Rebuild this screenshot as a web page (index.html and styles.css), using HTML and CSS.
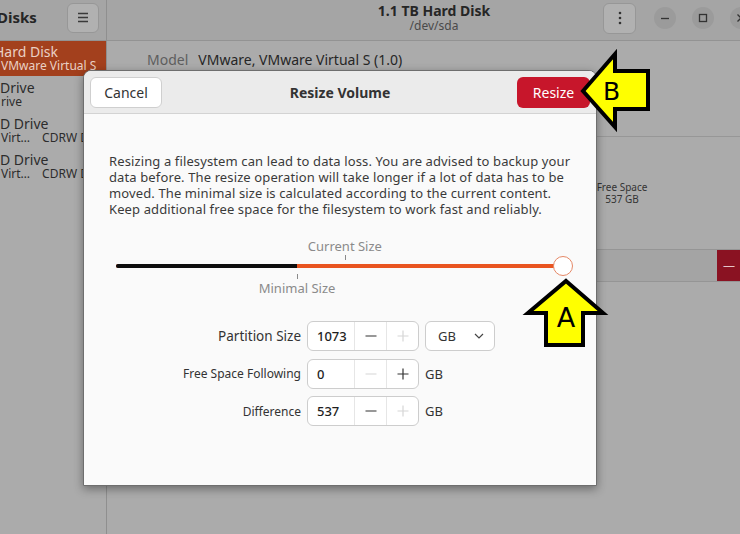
FILE: index.html
```html
<!DOCTYPE html>
<html lang="en">
<head>
<meta charset="utf-8">
<title>Disks – Resize Volume</title>
<link rel="stylesheet" href="styles.css">
</head>
<body>
<div class="app">
  <aside class="sidebar">
    <div class="side-head">
      <span class="app-title">Disks</span>
      <button class="menu-btn" aria-label="Menu">
        <svg width="12" height="11" viewBox="0 0 12 11"><path d="M1 1.5h10M1 5.5h10M1 9.5h10" stroke="#3a3a3a" stroke-width="1.3"/></svg>
      </button>
    </div>
    <ul class="disk-list">
      <li class="disk selected"><span class="d-name shift-h">Hard Disk</span><span class="d-sub">VMware Virtual S</span></li>
      <li class="disk"><span class="d-name">Drive</span><span class="d-sub">rive</span></li>
      <li class="disk"><span class="d-name">D Drive</span><span class="d-sub"><span>Virt…</span><span>CDRW Drive</span></span></li>
      <li class="disk"><span class="d-name">D Drive</span><span class="d-sub"><span>Virt…</span><span>CDRW Drive</span></span></li>
    </ul>
  </aside>
  <main class="main">
    <header class="main-head">
      <div class="title-box">
        <span class="win-title">1.1 TB Hard Disk</span>
        <span class="win-sub">/dev/sda</span>
      </div>
      <div class="head-actions">
        <button class="kebab" aria-label="More">
          <svg width="4" height="14" viewBox="0 0 4 14"><circle cx="2" cy="2" r="1.3" fill="#333"/><circle cx="2" cy="7" r="1.3" fill="#333"/><circle cx="2" cy="12" r="1.3" fill="#333"/></svg>
        </button>
        <span class="wbtn"><svg width="10" height="10" viewBox="0 0 10 10"><path d="M1 5.5h8" stroke="#333" stroke-width="1.3"/></svg></span>
        <span class="wbtn"><svg width="10" height="10" viewBox="0 0 10 10"><rect x="1.5" y="1.5" width="7" height="7" fill="none" stroke="#333" stroke-width="1.3"/></svg></span>
        <span class="wbtn"><svg width="10" height="10" viewBox="0 0 10 10"><path d="M1.5 1.5l7 7M8.5 1.5l-7 7" stroke="#333" stroke-width="1.3"/></svg></span>
      </div>
    </header>
    <section class="content">
      <div class="model-row"><span class="k">Model</span><span class="v">VMware, VMware Virtual S (1.0)</span></div>
      <div class="volumes">
        <div class="free"><span>Free Space</span><span>537 GB</span></div>
      </div>
      <div class="vol-toolbar">
        <span class="del-btn">—</span>
      </div>
    </section>
  </main>

  <div class="dialog" role="dialog" aria-label="Resize Volume">
    <div class="dlg-head">
      <button class="btn-cancel">Cancel</button>
      <span class="dlg-title">Resize Volume</span>
      <button class="btn-resize">Resize</button>
    </div>
    <div class="dlg-body">
      <p class="warn">Resizing a filesystem can lead to data loss. You are advised to backup your<br>data before. The resize operation will take longer if a lot of data has to be<br>moved. The minimal size is calculated according to the current content.<br>Keep additional free space for the filesystem to work fast and reliably.</p>

      <div class="slider">
        <span class="mark-label top" style="left:51.2%">Current Size</span>
        <span class="tick top" style="left:51.2%"></span>
        <div class="track"><div class="track-min" style="width:40.5%"></div></div>
        <span class="handle" style="left:100%"></span>
        <span class="tick bottom" style="left:40.5%"></span>
        <span class="mark-label bottom" style="left:40.5%">Minimal Size</span>
      </div>

      <div class="form">
        <label class="f-label big">Partition Size</label>
        <div class="spin">
          <span class="spin-val">1073</span>
          <span class="spin-btn"><svg width="12" height="12" viewBox="0 0 12 12"><path d="M0.5 6h11" stroke="#333" stroke-width="1.2"/></svg></span>
          <span class="spin-btn off"><svg width="12" height="12" viewBox="0 0 12 12"><path d="M0.5 6h11M6 0.5v11" stroke="#d6d6d6" stroke-width="1.2"/></svg></span>
        </div>
        <div class="dropdown"><span>GB</span><svg width="10" height="6" viewBox="0 0 10 6"><path d="M1 1l4 4 4-4" fill="none" stroke="#444" stroke-width="1.2"/></svg></div>

        <label class="f-label">Free Space Following</label>
        <div class="spin">
          <span class="spin-val">0</span>
          <span class="spin-btn off"><svg width="12" height="12" viewBox="0 0 12 12"><path d="M0.5 6h11" stroke="#d6d6d6" stroke-width="1.2"/></svg></span>
          <span class="spin-btn"><svg width="12" height="12" viewBox="0 0 12 12"><path d="M0.5 6h11M6 0.5v11" stroke="#333" stroke-width="1.2"/></svg></span>
        </div>
        <span class="unit">GB</span>

        <label class="f-label">Difference</label>
        <div class="spin">
          <span class="spin-val">537</span>
          <span class="spin-btn"><svg width="12" height="12" viewBox="0 0 12 12"><path d="M0.5 6h11" stroke="#333" stroke-width="1.2"/></svg></span>
          <span class="spin-btn off"><svg width="12" height="12" viewBox="0 0 12 12"><path d="M0.5 6h11M6 0.5v11" stroke="#d6d6d6" stroke-width="1.2"/></svg></span>
        </div>
        <span class="unit">GB</span>
      </div>
    </div>
  </div>

  <svg class="callout callout-b" width="80" height="82" viewBox="0 0 80 82">
    <polygon points="5,41 37,4 37,21 70,21 70,59 37,59 37,77" fill="#ffff00" stroke="#000" stroke-width="4" stroke-linejoin="miter"/>
    <text x="33.5" y="50" text-anchor="middle" class="callout-text">B</text>
  </svg>
  <svg class="callout callout-a" width="84" height="74" viewBox="0 0 84 74">
    <polygon points="42,4 79,36 59,36 59,68 22,68 22,36 4,36" fill="#ffff00" stroke="#000" stroke-width="4" stroke-linejoin="miter"/>
    <text x="42" y="50" text-anchor="middle" class="callout-text a">A</text>
  </svg>
</div>
</body>
</html>
```
FILE: styles.css
```css
* { box-sizing: border-box; }
html, body { margin: 0; padding: 0; }
body {
  font-family: "Noto Sans", "DejaVu Sans", sans-serif;
  color: #2c2c2c;
  background: #ababab;
}
button { font-family: inherit; }

.app {
  position: relative;
  width: 740px;
  height: 534px;
  overflow: hidden;
  display: flex;
  background: #ababab;
}

/* ---------- sidebar ---------- */
.sidebar {
  width: 107px;
  flex: none;
  border-right: 1px solid #8f8f8f;
  background: #ababab;
  display: flex;
  flex-direction: column;
}
.side-head {
  height: 41px;
  flex: none;
  display: flex;
  align-items: center;
  justify-content: space-between;
  padding: 0 7px 0 0;
  background: #a5a5a5;
  border-bottom: 1px solid #939393;
}
.app-title {
  font-weight: 700;
  font-size: 15px;
  line-height: 18px;
  margin-left: -3px;
  margin-top: -6px;
  color: #262626;
}
.menu-btn {
  width: 32px;
  height: 30px;
  border: 1px solid #979797;
  border-radius: 6px;
  background: #b1b1b1;
  display: flex;
  align-items: center;
  justify-content: center;
  padding: 0;
  margin-top: -5px;
}
.disk-list { list-style: none; margin: 0; padding: 0; }
.disk {
  height: 36px;
  display: flex;
  flex-direction: column;
  justify-content: center;
  overflow: hidden;
  white-space: nowrap;
}
.disk.selected { background: #a3401d; color: #ead0c4; height: 35px; }
.d-name { font-size: 14px; line-height: 15px; }
.d-name.shift-h { margin-left: -6px; }
.d-sub { font-size: 12px; line-height: 14px; display: flex; gap: 12px; padding-left: 1px; }

/* ---------- main ---------- */
.main {
  flex: 1;
  display: flex;
  flex-direction: column;
  min-width: 0;
}
.main-head {
  height: 41px;
  flex: none;
  display: flex;
  align-items: center;
  background: #a5a5a5;
  border-bottom: 1px solid #939393;
  margin-right: -12px;
}
.title-box {
  width: 200px;
  margin-left: 227px;
  display: flex;
  flex-direction: column;
  align-items: center;
  line-height: 15px;
  margin-top: -4px;
}
.win-title { font-weight: 700; font-size: 14px; color: #262626; }
.win-sub { font-size: 12px; color: #4a4a4a; }
.head-actions {
  margin-left: auto;
  display: flex;
  align-items: center;
  gap: 16px;
  margin-top: -4px;
}
.kebab {
  width: 33px;
  height: 31px;
  border: 1px solid #979797;
  border-radius: 6px;
  background: #b1b1b1;
  display: flex;
  align-items: center;
  justify-content: center;
  padding: 0;
  margin-right: 2px;
}
.wbtn {
  width: 22px;
  height: 22px;
  border-radius: 50%;
  background: #9b9b9b;
  display: flex;
  align-items: center;
  justify-content: center;
}

.content {
  flex: 1;
  display: flex;
  flex-direction: column;
  background: #ababab;
}
.model-row {
  height: 96px;
  padding: 9px 0 0 40px;
  font-size: 14px;
  line-height: 20px;
  border-bottom: 1px solid #979797;
  display: flex;
  gap: 10px;
  align-items: flex-start;
}
.model-row .k { color: #5e5e5e; }
.model-row .v { color: #262626; }
.volumes {
  height: 112px;
  display: flex;
  justify-content: flex-end;
  padding-top: 44px;
}
.free {
  width: 236px;
  display: flex;
  flex-direction: column;
  align-items: center;
  gap: 0;
  font-size: 10px;
  line-height: 12px;
  color: #333;
}
.vol-toolbar {
  height: 33px;
  background: #a4a4a4;
  border-top: 1px solid #959595;
  border-bottom: 1px solid #959595;
  display: flex;
  justify-content: flex-end;
}
.del-btn {
  width: 24px;
  background: #8a1222;
  color: #e5c4c8;
  font-size: 12px;
  display: flex;
  align-items: center;
  justify-content: center;
  margin-right: -1px;
}

/* ---------- dialog ---------- */
.dialog {
  position: absolute;
  left: 83px;
  top: 70px;
  width: 514px;
  height: 416px;
  background: #fafafa;
  border: 1px solid #6e6e6e;
  border-radius: 8px 8px 0 0;
  box-shadow: 0 3px 10px rgba(0,0,0,0.38);
  display: flex;
  flex-direction: column;
  overflow: hidden;
}
.dlg-head {
  height: 43px;
  flex: none;
  background: #ebebeb;
  border-bottom: 1px solid #d3d3d3;
  display: grid;
  grid-template-columns: 1fr auto 1fr;
  align-items: center;
  padding: 0 6px;
}
.btn-cancel {
  justify-self: start;
  width: 72px;
  height: 31px;
  border: 1px solid #cfcfcf;
  border-radius: 6px;
  background: #ffffff;
  font-size: 14px;
  color: #333;
  padding: 0;
}
.dlg-title { font-weight: 700; font-size: 14px; color: #333; }
.btn-resize {
  justify-self: end;
  width: 73px;
  height: 31px;
  border: none;
  border-radius: 6px;
  background: #c7162b;
  color: #fff;
  font-size: 14px;
  padding: 0;
}
.dlg-body {
  flex: 1;
  padding: 39px 25px 0 25px;
  display: flex;
  flex-direction: column;
}
.warn {
  margin: 0;
  font-size: 13px;
  line-height: 16px;
  letter-spacing: 0.12px;
  color: #3a3a3a;
  white-space: nowrap;
}

.slider {
  position: relative;
  margin: 21px 0 0 7px;
  width: 447px;
  height: 58px;
}
.mark-label {
  position: absolute;
  transform: translateX(-50%);
  font-size: 13px;
  line-height: 16px;
  color: #8a8a8a;
  white-space: nowrap;
}
.mark-label.top { top: 0; }
.mark-label.bottom { top: 42px; }
.tick {
  position: absolute;
  width: 1px;
  height: 5px;
  background: #8a8a8a;
}
.tick.top { top: 17px; }
.tick.bottom { top: 36px; }
.track {
  position: absolute;
  left: 0;
  right: 0;
  top: 26px;
  height: 4px;
  border-radius: 2px;
  background: #e95420;
}
.track-min {
  height: 100%;
  background: #0d0d0d;
  border-radius: 2px 0 0 2px;
}
.handle {
  position: absolute;
  top: 18px;
  width: 20px;
  height: 20px;
  margin-left: -10px;
  border-radius: 50%;
  background: #fff;
  border: 1.5px solid #e58866;
}

.form {
  margin-top: 25px;
  display: grid;
  grid-template-columns: 193px 112px auto;
  grid-auto-rows: 30px;
  column-gap: 6px;
  row-gap: 7.5px;
  align-items: center;
  margin-left: -1px;
}
.f-label {
  justify-self: end;
  font-size: 12px;
  color: #333;
}
.f-label.big { font-size: 13.5px; }
.spin {
  height: 30px;
  display: flex;
  border: 1px solid #cdcdcd;
  border-radius: 6px;
  background: #fff;
  overflow: hidden;
}
.spin-val {
  width: 46px;
  padding-left: 9px;
  display: flex;
  align-items: center;
  font-size: 13px;
  font-weight: 500;
  color: #1e1e1e;
}
.spin-btn {
  flex: 1;
  display: flex;
  align-items: center;
  justify-content: center;
  border-left: 1px solid #e6e6e6;
}
.dropdown {
  justify-self: start;
  width: 70px;
  height: 30px;
  border: 1px solid #cdcdcd;
  border-radius: 6px;
  background: #fff;
  display: flex;
  align-items: center;
  justify-content: space-between;
  padding: 0 10px 0 12px;
  font-size: 13px;
  color: #333;
}
.unit { font-size: 13px; color: #333; }

/* ---------- callouts ---------- */
.callout { position: absolute; overflow: visible; }
.callout-b { left: 578px; top: 50px; }
.callout-a { left: 524px; top: 277px; }
.callout-text {
  font-family: "DejaVu Sans", "Liberation Sans", sans-serif;
  font-size: 25px;
  fill: #000;
}
.callout-text.a { font-size: 27px; }
```
